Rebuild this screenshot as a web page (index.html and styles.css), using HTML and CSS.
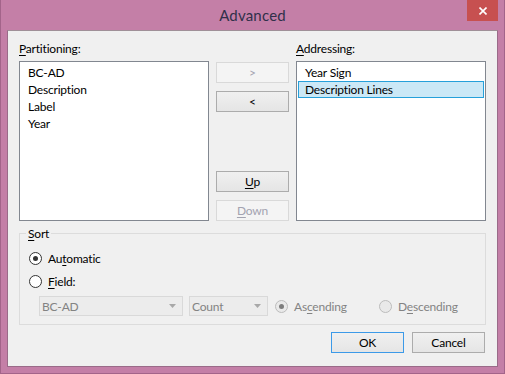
FILE: index.html
```html
<!DOCTYPE html>
<html>
<head>
<meta charset="utf-8">
<title>Advanced</title>
<link rel="stylesheet" href="styles.css">
</head>
<body>
<div class="window">
  <div class="titlebar">
    <span></span>
    <div class="title">Advanced</div>
    <div class="close">
      <svg width="8" height="8" viewBox="0 0 8 8"><path d="M0.5 0.5 L7.5 7.5 M7.5 0.5 L0.5 7.5" stroke="#fff" stroke-width="1.6" fill="none"/></svg>
    </div>
  </div>
  <div class="client">
    <div class="panes">
      <div class="label"><u>P</u>artitioning:</div>
      <div></div>
      <div class="label"><u>A</u>ddressing:</div>
      <div class="list">
        <div class="item">BC-AD</div>
        <div class="item">Description</div>
        <div class="item">Label</div>
        <div class="item">Year</div>
      </div>
      <div class="mid">
        <div class="btngroup">
          <div class="btn disabled">&gt;</div>
          <div class="btn">&lt;</div>
        </div>
        <div class="btngroup">
          <div class="btn"><u>U</u>p</div>
          <div class="btn disabled"><u>D</u>own</div>
        </div>
      </div>
      <div class="list">
        <div class="item">Year Sign</div>
        <div class="item selected">Description Lines</div>
      </div>
    </div>
    <div class="group">
      <div class="group-title"><u>S</u>ort</div>
      <div class="radio-row"><span class="radio checked"><span class="dot"></span></span><span>Au<u>t</u>omatic</span></div>
      <div class="radio-row"><span class="radio"></span><span><u>F</u>ield:</span></div>
      <div class="field-row">
        <div class="combo wide"><span>BC-AD</span><svg width="7" height="4" viewBox="0 0 7 4"><path d="M0 0 H7 L3.5 4 Z" fill="#a8a8a8"/></svg></div>
        <div class="combo narrow"><span>Count</span><svg width="7" height="4" viewBox="0 0 7 4"><path d="M0 0 H7 L3.5 4 Z" fill="#a8a8a8"/></svg></div>
        <div class="radio-row disabled asc"><span class="radio checked"><span class="dot"></span></span><span>As<u>c</u>ending</span></div>
        <div class="radio-row disabled"><span class="radio"></span><span>D<u>e</u>scending</span></div>
      </div>
    </div>
    <div class="actions">
      <div class="btn default">OK</div>
      <div class="btn">Cancel</div>
    </div>
  </div>
</div>
</body>
</html>
```

FILE: styles.css
```css
html, body {
  margin: 0;
  padding: 0;
}
body {
  width: 505px;
  height: 374px;
  overflow: hidden;
  font-family: "Lato", "Liberation Sans", sans-serif;
  font-size: 12px;
  letter-spacing: -0.2px;
  color: #000;
}
.window {
  box-sizing: border-box;
  width: 505px;
  height: 374px;
  background: #c47fa7;
  border: 1px solid #a3648a;
  border-top: 0;
  padding: 0 6px 6px 6px;
  display: flex;
  flex-direction: column;
}
.titlebar {
  height: 30px;
  display: grid;
  grid-template-columns: 1fr auto 1fr;
  align-items: start;
}
.title {
  font-size: 15px;
  line-height: 15px;
  padding-top: 8px;
  color: #30304a;
  letter-spacing: 0.2px;
}
.close {
  justify-self: end;
  width: 31px;
  height: 21px;
  background: #c75050;
  display: flex;
  align-items: center;
  justify-content: center;
}
.client {
  flex: 1;
  background: #f0f0f0;
  border: 1px solid #9a6b89;
  border-top-color: #a09098;
  padding: 10px 11px 0 11px;
}
.panes {
  display: grid;
  grid-template-columns: 190px 73px 190px;
  grid-template-rows: 16px 160px;
  column-gap: 7px;
  row-gap: 4px;
}
.label {
  line-height: 16px;
}
u {
  text-decoration: underline;
  text-underline-offset: 2px;
}
.list {
  box-sizing: border-box;
  background: #fff;
  border: 1px solid #828790;
  padding: 2px 1px;
}
.item {
  height: 17px;
  line-height: 15px;
  box-sizing: border-box;
  border: 1px solid transparent;
  padding-left: 6px;
  white-space: nowrap;
}
.item.selected {
  background: #cbe8f6;
  border-color: #26a0da;
}
.mid {
  display: flex;
  flex-direction: column;
  justify-content: space-between;
  padding: 1px 0 0 0;
}
.btngroup {
  display: flex;
  flex-direction: column;
  gap: 8px;
}
.btn {
  box-sizing: border-box;
  width: 73px;
  height: 21px;
  border: 1px solid #acacac;
  background: linear-gradient(#f0f0f0, #e5e5e5);
  display: flex;
  align-items: center;
  justify-content: center;
  line-height: 15px;
}
.btn.disabled {
  border-color: #d9d9d9;
  background: #f4f4f4;
  color: #a3a3b0;
}
.btn.default {
  border-color: #3c9ae8;
}
.group {
  position: relative;
  box-sizing: border-box;
  width: 467px;
  margin-top: 12px;
  border: 1px solid #dcdcdc;
  padding: 16px 0 8px 9px;
  display: flex;
  flex-direction: column;
  gap: 7px;
}
.group-title {
  position: absolute;
  top: -8px;
  left: 6px;
  padding: 0 2px;
  background: #f0f0f0;
  line-height: 15px;
}
.radio-row {
  display: flex;
  align-items: center;
  gap: 6px;
  height: 16px;
  line-height: 15px;
}
.radio {
  box-sizing: border-box;
  width: 13px;
  height: 13px;
  border-radius: 50%;
  border: 1px solid #333;
  background: #fff;
  display: flex;
  align-items: center;
  justify-content: center;
  flex: none;
}
.dot {
  width: 5px;
  height: 5px;
  border-radius: 50%;
  background: #333;
}
.radio-row.disabled {
  color: #838383;
}
.radio-row.disabled .radio {
  border-color: #bcbcbc;
  background: #e9e9e9;
}
.radio-row.disabled .dot {
  background: #7d7d7d;
}
.field-row {
  display: flex;
  align-items: center;
  height: 20px;
  margin-left: 10px;
}
.combo {
  box-sizing: border-box;
  height: 20px;
  border: 1px solid #d9d9d9;
  background: #ececec;
  color: #838383;
  display: flex;
  align-items: center;
  justify-content: space-between;
  padding: 0 6px 0 2px;
}
.combo.wide {
  width: 144px;
}
.combo.narrow {
  width: 79px;
  margin-left: 6px;
  margin-right: 7px;
}
.asc {
  width: 104px;
}
.actions {
  display: flex;
  justify-content: flex-end;
  gap: 8px;
  width: 466px;
  margin-top: 7px;
}
```
